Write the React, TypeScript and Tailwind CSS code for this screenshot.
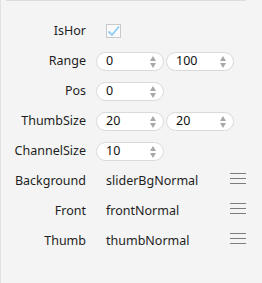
import React from 'react';

const font = { fontFamily: '"Noto Sans", "Liberation Sans", sans-serif' };

const SpinBox = ({ value }: { value: string }) => (
    <div className="relative w-[68px] h-[19px] rounded-full bg-white border border-[#dadada] flex items-center">
        <span className="pl-[9px] text-[12.5px] leading-none text-[#111]">{value}</span>
        <div className="absolute right-[7px] top-[3px] flex flex-col items-center gap-[2px]">
            <svg width="6" height="5" viewBox="0 0 6 5"><path d="M3 0 L6 5 L0 5 Z" fill="#a8a8a8" /></svg>
            <svg width="6" height="5" viewBox="0 0 6 5"><path d="M0 0 L6 0 L3 5 Z" fill="#a8a8a8" /></svg>
        </div>
    </div>
);

const MenuIcon = () => (
    <div className="flex flex-col gap-[4px] w-[16px]">
        <div className="h-px bg-[#7d7d7d]"></div>
        <div className="h-px bg-[#7d7d7d]"></div>
        <div className="h-px bg-[#7d7d7d]"></div>
    </div>
);

const Row = ({ label, children }: { label: string; children: React.ReactNode }) => (
    <div className="flex items-center h-[30px]">
        <div className="w-[85px] text-right text-[12.5px] text-[#1e1e1e] shrink-0">{label}</div>
        <div className="ml-[10px] flex items-center gap-[2px] flex-1">{children}</div>
    </div>
);

const RefRow = ({ label, value }: { label: string; value: string }) => (
    <Row label={label}>
        <span className="pl-[10px] text-[12.5px] text-[#1e1e1e] flex-1">{value}</span>
        <div className="mr-[16px] mb-[5px]"><MenuIcon /></div>
    </Row>
);

export default function App() {
    return (
        <div className="w-[262px] h-[283px] bg-[#f4f4f4] border-l border-[#e2e2e2] overflow-hidden" style={font}>
            <div className="ml-[5px] w-[240px] h-px bg-[#dcdcdc]"></div>
            <div className="pt-[15px]">
                <Row label="IsHor">
                    <div className="ml-[10px] w-[15px] h-[14px] border border-[#c9c9c9] bg-[#fafafa] flex items-center justify-center">
                        <svg width="13" height="12" viewBox="0 0 13 12">
                            <path d="M1.5 6.5 L5 10 L12 1.5" fill="none" stroke="#8ccdf7" strokeWidth="1.8" />
                        </svg>
                    </div>
                </Row>
                <Row label="Range">
                    <SpinBox value="0" />
                    <SpinBox value="100" />
                </Row>
                <Row label="Pos">
                    <SpinBox value="0" />
                </Row>
                <Row label="ThumbSize">
                    <SpinBox value="20" />
                    <SpinBox value="20" />
                </Row>
                <Row label="ChannelSize">
                    <SpinBox value="10" />
                </Row>
                <RefRow label="Background" value="sliderBgNormal" />
                <RefRow label="Front" value="frontNormal" />
                <RefRow label="Thumb" value="thumbNormal" />
            </div>
        </div>
    );
}
